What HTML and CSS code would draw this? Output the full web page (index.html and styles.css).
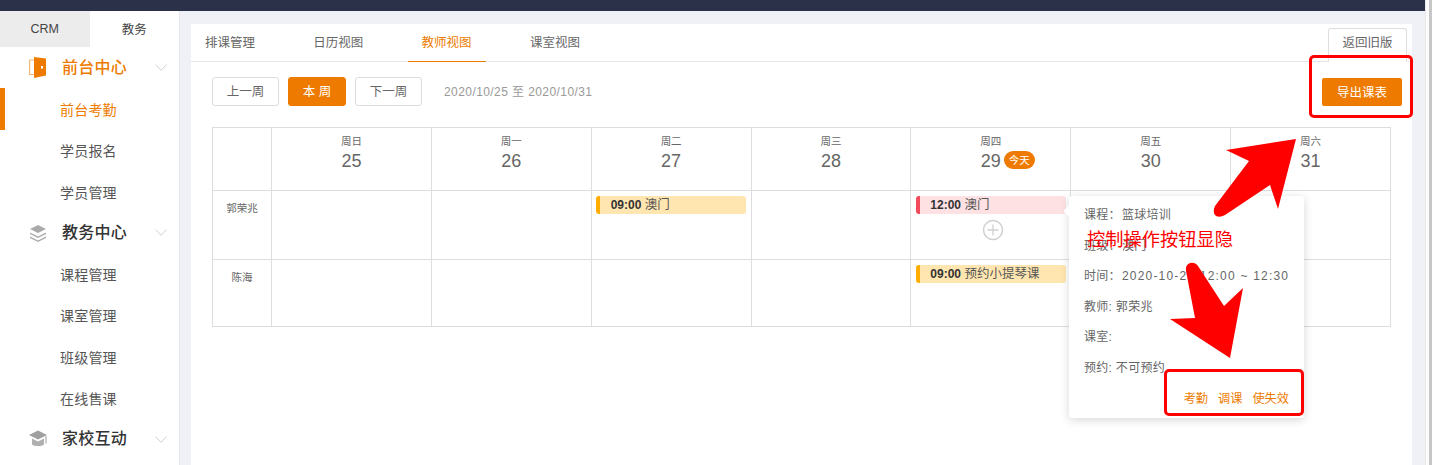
FILE: index.html
```html
<!DOCTYPE html>
<html lang="zh">
<head>
<meta charset="utf-8">
<title>教师视图</title>
<link rel="stylesheet" href="styles.css">
</head>
<body>
<div class="page">
  <div class="app">
    <div class="topbar"></div>
    <div class="body">
      <aside class="sidebar">
        <div class="switch"><div class="switch-tab off">CRM</div><div class="switch-tab">教务</div></div>
        <div class="group active">
          <svg class="gicon door" viewBox="0 0 17 21"><path d="M.6 3h5v14.500h-5z" fill="none" stroke="#f6b877" stroke-width="1.200"/><path d="M5 0l12 1.500v17L5 21z" fill="#ee7b00"/><rect x="12" y="9" width="2" height="2.600" fill="#fff"/></svg>
          <span class="gname">前台中心</span>
          <svg class="chev" viewBox="0 0 12 7"><path d="M.5.5L6 6.300 11.500.5" fill="none" stroke="#ccc" stroke-width=".9"/></svg>
        </div>
        <div class="item current">前台考勤</div>
        <div class="item">学员报名</div>
        <div class="item">学员管理</div>
        <div class="group">
          <svg class="gicon" viewBox="0 0 18 18"><path d="M9 1l8 4-8 4-8-4z" fill="#aaa"/><path d="M1 8.500l8 4 8-4v1.500l-8 4-8-4z" fill="#aaa"/><path d="M1 12.500l8 4 8-4V14l-8 4-8-4z" fill="#aaa"/></svg>
          <span class="gname">教务中心</span>
          <svg class="chev" viewBox="0 0 12 7"><path d="M.5.5L6 6.300 11.500.5" fill="none" stroke="#ccc" stroke-width=".9"/></svg>
        </div>
        <div class="item">课程管理</div>
        <div class="item">课室管理</div>
        <div class="item">班级管理</div>
        <div class="item">在线售课</div>
        <div class="group">
          <svg class="gicon" viewBox="0 0 18 17"><path d="M9 0l9 4.500-9 4.500L0 4.500z" fill="#a0a0a0"/><path d="M3 8l6 3 6-3v6c-2 2-10 2-12 0z" fill="#b0b0b0"/><path d="M17 5.500V13" stroke="#a0a0a0" stroke-width="1" fill="none"/></svg>
          <span class="gname">家校互动</span>
          <svg class="chev" viewBox="0 0 12 7"><path d="M.5.5L6 6.300 11.500.5" fill="none" stroke="#ccc" stroke-width=".9"/></svg>
        </div>
      </aside>
      <main class="main">
        <section class="card">
          <div class="tabs">
            <div class="tab">排课管理</div>
            <div class="tab">日历视图</div>
            <div class="tab selected">教师视图</div>
            <div class="tab">课室视图</div>
            <button class="old-btn">返回旧版</button>
          </div>
          <div class="toolbar">
            <button class="btn">上一周</button>
            <button class="btn primary">本 周</button>
            <button class="btn">下一周</button>
            <span class="range">2020/10/25 至 2020/10/31</span>
            <button class="export">导出课表</button>
          </div>
          <div class="table">
            <div class="cell head"></div>
            <div class="cell head"><span class="wk">周日</span><span class="dn">25</span></div>
            <div class="cell head"><span class="wk">周一</span><span class="dn">26</span></div>
            <div class="cell head"><span class="wk">周二</span><span class="dn">27</span></div>
            <div class="cell head"><span class="wk">周三</span><span class="dn">28</span></div>
            <div class="cell head"><span class="wk">周四</span><span class="dn">29<span class="today">今天</span></span></div>
            <div class="cell head"><span class="wk">周五</span><span class="dn">30</span></div>
            <div class="cell head"><span class="wk">周六</span><span class="dn">31</span></div>

            <div class="cell name">郭荣兆</div>
            <div class="cell"></div>
            <div class="cell"></div>
            <div class="cell"><div class="ev yellow"><b>09:00</b> 澳门</div></div>
            <div class="cell"></div>
            <div class="cell">
              <div class="ev pink"><b>12:00</b> 澳门</div>
              <svg class="plus" viewBox="0 0 22 22"><circle cx="11" cy="11" r="9.500" fill="none" stroke="#d0d0d0" stroke-width="1.500"/><path d="M11 5.500v11M5.500 11h11" stroke="#d0d0d0" stroke-width="1.300"/></svg>
            </div>
            <div class="cell"></div>
            <div class="cell"></div>

            <div class="cell name">陈海</div>
            <div class="cell"></div>
            <div class="cell"></div>
            <div class="cell"></div>
            <div class="cell"></div>
            <div class="cell"><div class="ev yellow"><b>09:00</b> 预约小提琴课</div></div>
            <div class="cell"></div>
            <div class="cell"></div>
          </div>
        </section>
      </main>
    </div>
  </div>
  <div class="scrollbar"><div class="thumb"></div></div>

  <div class="popover">
    <span class="pop-arrow"></span>
    <p>课程：<span class="val">篮球培训</span></p>
    <p>班级：<span class="val">澳门</span></p>
    <p>时间：<span class="val num">2020-10-29 12:00 ~ 12:30</span></p>
    <p>教师: 郭荣兆</p>
    <p>课室:</p>
    <p>预约: 不可预约</p>
    <div class="actions"><a>考勤</a><a>调课</a><a>使失效</a></div>
  </div>

  <div class="mark mark-export"></div>
  <div class="mark mark-actions"></div>
  <div class="note">控制操作按钮显隐</div>
  <svg class="arrows" viewBox="0 0 1432 465">
    <path d="M1296 139L1226 150 1249 161 1215 206Q1212 213 1216 216 1220 218 1225 215L1270 185 1278 209z" fill="#fe0000"/>
    <path d="M1230 358L1170 319 1195 318 1186 271Q1185 265 1190 263 1195 262 1198 266L1224 306 1243 288z" fill="#fe0000"/>
  </svg>
</div>
</body>
</html>
```
FILE: styles.css
```css
* { box-sizing: border-box; }
html, body { margin: 0; padding: 0; height: 100%; overflow: hidden; }
body {
  font-family: "Liberation Sans", "Noto Sans CJK SC", sans-serif;
  color: #555;
  background: #fff;
}
.page { position: relative; display: flex; width: 1432px; height: 465px; overflow: hidden; }
.app { flex: 1; display: flex; flex-direction: column; min-width: 0; }
.topbar { height: 11px; background: #2a3149; flex: none; }
.body { flex: 1; display: flex; min-height: 0; }

.scrollbar { width: 7px; background: #fbfbfb; border-left: 1px solid #e8e8e8; display: flex; justify-content: flex-end; }
.thumb { width: 3px; height: 100%; background: #c6c6c6; }

.sidebar { width: 180px; flex: none; background: #fff; border-right: 1px solid #e6e8ee; overflow: hidden; }
.switch { display: flex; height: 36px; font-size: 12.500px; color: #444; }
.switch-tab { width: 90px; display: flex; align-items: center; justify-content: center; padding-bottom: 1px; }
.switch-tab.off { background: #ececec; }
.group { height: 41.300px; display: flex; align-items: center; color: #333; font-size: 16px; font-weight: 500; padding-left: 29px; }
.group.active { color: #ee7b00; }
.gicon { width: 18px; height: 20px; flex: none; margin-right: 15px; }
.gicon.door { width: 17px; height: 21px; margin-right: 16px; }
.gname { width: 65px; letter-spacing: .25px; white-space: nowrap; line-height: 20px; }
.chev { width: 12px; height: 7px; margin-left: 28px; flex: none; }
.item { height: 41.300px; display: flex; align-items: center; padding-left: 60px; font-size: 14px; color: #555; letter-spacing: .2px; }
.item.current { color: #ee7b00; border-left: 5px solid #ee7b00; padding-left: 55px; }

.main { flex: 1; min-width: 0; background: #eff1f6; padding: 13px 13px 0 11px; }
.card { background: #fff; height: 100%; }

.tabs { display: flex; height: 38px; border-bottom: 1px solid #e6e6e6; position: relative; }
.tab { width: 78px; margin-right: 30.300px; text-align: center; font-size: 12.500px; color: #666; line-height: 38px; height: 38px; }
.tab.selected { color: #ee7b00; border-bottom: 1px solid #ee7b00; }
.old-btn {
  position: absolute; right: 5px; top: 4px; width: 79px; height: 34px; padding: 0 0 7px;
  background: #fff; border: 1px solid #ddd; border-bottom-color: #fff; border-radius: 3px 3px 0 0;
  font: 12.500px "Liberation Sans", "Noto Sans CJK SC", sans-serif; color: #666;
}

.toolbar { display: flex; align-items: center; height: 29px; margin: 15px 10px 0 21px; }
.btn {
  width: 67px; height: 29px; margin-right: 9px; padding: 0 0 2px;
  background: #fff; border: 1px solid #ddd; border-radius: 3px;
  font: 12.500px "Liberation Sans", "Noto Sans CJK SC", sans-serif; color: #666;
}
.btn.primary { width: 58px; background: #ee7b00; border-color: #ee7b00; color: #fff; }
.range { margin: 0 0 2px 13px; font-size: 12px; letter-spacing: .42px; color: #999; }
.export {
  margin-left: auto; width: 80px; height: 28px; padding: 0 0 1px; border: 0; border-radius: 2px;
  background: #ee7b00; color: #fff; font: 12.500px "Liberation Sans", "Noto Sans CJK SC", sans-serif;
}

.table {
  display: grid;
  grid-template-columns: 59px repeat(7, 1fr);
  grid-template-rows: 63px 69px 67px;
  width: 1179px; margin: 21px 0 0 21px;
  border-top: 1px solid #ddd; border-left: 1px solid #ddd;
}
.cell { border-right: 1px solid #ddd; border-bottom: 1px solid #ddd; min-width: 0; position: relative; padding: 5px 4px 0; display: flex; flex-direction: column; align-items: center; }
.cell.head { padding: 6px 0 0; }
.wk { font-size: 10.500px; line-height: 14px; color: #666; }
.dn { font-size: 18px; line-height: 22px; color: #666; margin-top: 2px; position: relative; }
.today {
  position: absolute; left: 23px; top: 1px; width: 31px; height: 18px; border-radius: 9px;
  background: #ee7b00; color: #fff; font-size: 10.500px; line-height: 18px; text-align: center;
}
.cell.name { font-size: 10.500px; color: #666; justify-content: flex-start; padding-top: 9px; }
.ev {
  width: 150px; height: 18px; border-radius: 3px; font-size: 12.500px; line-height: 18px; color: #555;
  padding-left: 10.500px; white-space: nowrap; overflow: hidden; border-left: 4px solid;
  flex: none;
}
.ev b { color: #333; font-weight: 700; font-size: 12px; }
.ev.yellow { background: #ffe6b0; border-left-color: #ffae00; }
.ev.pink { background: #fde1e3; border-left-color: #f24b5c; }
.plus { width: 22px; height: 22px; margin: 5px 0 0 4px; flex: none; }

.popover {
  position: absolute; left: 1069px; top: 196px; width: 235px; height: 222px;
  background: #fff; border-radius: 3px; box-shadow: 0 2px 10px rgba(0,0,0,.16);
  padding: 10px 15px 0; font-size: 12px; color: #666; letter-spacing: .3px;
}
.popover p { margin: 0; height: 30.600px; line-height: 18px; white-space: nowrap; }
.val { margin-left: 1px; }
.num { letter-spacing: 1.200px; }
.pop-arrow { position: absolute; left: -4px; top: 11px; width: 8px; height: 8px; background: #fff; transform: rotate(45deg); }
.actions { position: absolute; right: 15px; top: 194px; display: flex; gap: 10px; color: #ee7b00; font-size: 12.200px; line-height: 18px; letter-spacing: 0; }

.mark { position: absolute; border: 3px solid #fe0000; border-radius: 5px; }
.mark-export { left: 1309px; top: 55px; width: 104px; height: 63px; }
.mark-actions { left: 1164px; top: 369px; width: 140px; height: 47px; }
.note { position: absolute; left: 1087px; top: 227px; font-size: 18.250px; line-height: 26px; color: #fe0000; white-space: nowrap; }
.arrows { position: absolute; left: 0; top: 0; width: 1432px; height: 465px; pointer-events: none; }
```
